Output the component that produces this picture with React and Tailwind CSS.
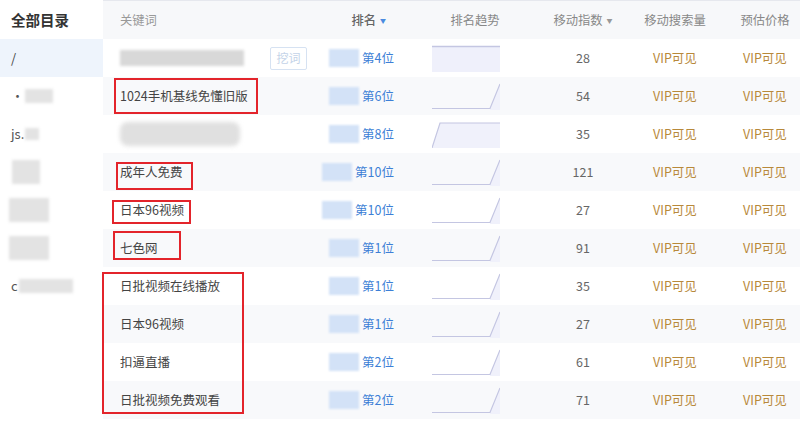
import React from "react";

const rows = [
  { kw: null, blurKw: "a", rank: "第4位", chart: "flat", idx: 28 },
  { kw: "1024手机基线免懂旧版", rank: "第6位", chart: "late", idx: 54 },
  { kw: null, blurKw: "b", rank: "第8位", chart: "early", idx: 35 },
  { kw: "成年人免费", rank: "第10位", chart: "late", idx: 121 },
  { kw: "日本96视频", rank: "第10位", chart: "late", idx: 27 },
  { kw: "七色网", rank: "第1位", chart: "late", idx: 91 },
  { kw: "日批视频在线播放", rank: "第1位", chart: "late", idx: 35 },
  { kw: "日本96视频", rank: "第1位", chart: "late", idx: 27 },
  { kw: "扣逼直播", rank: "第2位", chart: "late", idx: 61 },
  { kw: "日批视频免费观看", rank: "第2位", chart: "late", idx: 71 },
];

function Chart({ type }) {
  return (
    <svg width="68" height="27" viewBox="0 0 68 27">
      {type === "flat" && (
        <>
          <rect x="0" y="1" width="68" height="26" fill="#eff0fb" />
          <line x1="0" y1="1.5" x2="68" y2="1.5" stroke="#c4c6e2" strokeWidth="1.5" />
        </>
      )}
      {type === "early" && (
        <>
          <path d="M0,27 L8,2 L68,2 L68,27 Z" fill="#f0f1fb" />
          <path d="M0,27 L8,2 L68,2" fill="none" stroke="#c4c6e2" strokeWidth="1.2" />
        </>
      )}
      {type === "late" && (
        <>
          <path d="M58,25 L68,1 L68,27 L58,27 Z" fill="#f0f1fb" />
          <path d="M0,25.5 L58,25.5 L68,1" fill="none" stroke="#c4c6e2" strokeWidth="1.2" />
        </>
      )}
    </svg>
  );
}

const sideItems = [
  { t: "/", active: true },
  { blur: "w-[28px] h-[14px]", pre: "·" },
  { pre: "js.", blur: "w-[14px] h-[12px]" },
  { blur: "w-[28px] h-[24px]" },
  { blur: "w-[40px] h-[24px]", shift: true },
  { blur: "w-[40px] h-[24px]", shift: true },
  { pre: "c", blur: "w-[54px] h-[14px]" },
];

export default function App() {
  return (
    <div
      className="relative w-[800px] h-[423px] overflow-hidden bg-white flex"
      style={{ fontFamily: '"Noto Sans CJK SC", "Noto Sans", sans-serif' }}
    >
      {/* sidebar */}
      <div className="w-[103px] flex flex-col bg-white">
        <div className="h-[39px] flex items-center pl-[11px] text-[14.5px] font-bold text-[#333]">
          全部目录
        </div>
        {sideItems.map((s, i) => (
          <div
            key={i}
            className={`h-[38px] flex items-center ${s.shift ? "pl-[8px]" : "pl-[11px]"} text-[13px] text-[#444] ${s.active ? "bg-[#eef4fc]" : ""}`}
          >
            {s.t && <span>{s.t}</span>}
            {s.pre && <span className="text-[#555]">{s.pre}</span>}
            {s.blur && <div className={`${s.blur} bg-[#e3e3e3] blur-[1.5px] ml-[1px]`} />}
          </div>
        ))}
      </div>

      {/* table */}
      <div className="flex-1 flex flex-col border-t border-[#e6e8ee]">
        <div className="h-[38px] grid grid-cols-[217px_100px_110px_102px_86px_82px] items-center bg-[#f7f8fa] text-[12.3px] text-[#888]">
          <div className="pl-[17px] text-[#999]">关键词</div>
          <div className="flex justify-end items-center pr-[34px] text-[#666] font-medium">
            排名<span className="ml-[4px] text-[#4a8be0] text-[6px]">▼</span>
          </div>
          <div className="text-center">排名趋势</div>
          <div className="flex justify-center items-center pl-[4px]">
            移动指数<span className="ml-[4px] text-[#999] text-[6px]">▼</span>
          </div>
          <div className="text-center">移动搜索量</div>
          <div className="text-center pl-[12px]">预估价格</div>
        </div>
        {rows.map((r, i) => (
          <div
            key={i}
            className={`h-[38px] grid grid-cols-[217px_100px_110px_102px_86px_82px] items-center text-[12.5px] ${i % 2 === 1 ? "bg-[#f8f9fb]" : "bg-white"}`}
          >
            <div className="pl-[17px] flex items-center text-[#444]">
              {r.kw ? (
                <span>{r.kw}</span>
              ) : r.blurKw === "a" ? (
                <>
                  <div className="w-[124px] h-[16px] bg-[#d8d8d8] blur-[1.5px]" />
                  <div className="ml-[26px] w-[37px] h-[23px] border border-[#d6e2f2] rounded-[2px] flex items-center justify-center text-[12px] text-[#c4d3e8]">
                    挖词
                  </div>
                </>
              ) : (
                <div className="w-[120px] h-[24px] rounded-[8px] bg-[#e0e0e0] blur-[2px]" />
              )}
            </div>
            <div className="flex justify-end items-center pr-[26px]">
              <div className="w-[30px] h-[18px] bg-[#d3e2f7] blur-[1px] mr-[3px]" />
              <span className="text-[#3d7fd6]">{r.rank}</span>
            </div>
            <div className="pl-[12px] flex items-center">
              <Chart type={r.chart} />
            </div>
            <div className="text-center pl-[4px] text-[#666]">{r.idx}</div>
            <div className="text-center text-[#b8893a]">VIP可见</div>
            <div className="text-center pl-[12px] text-[#b8893a]">VIP可见</div>
          </div>
        ))}
      </div>

      {/* red highlight boxes */}
      <div className="absolute left-[114px] top-[78px] w-[144px] h-[36px] border-2 border-[#e3242b]" />
      <div className="absolute left-[116px] top-[162px] w-[77px] h-[28px] border-2 border-[#e3242b]" />
      <div className="absolute left-[112px] top-[200px] w-[79px] h-[24px] border-2 border-[#e3242b]" />
      <div className="absolute left-[113px] top-[231px] w-[68px] h-[29px] border-2 border-[#e3242b]" />
      <div className="absolute left-[102px] top-[272px] w-[142px] h-[142px] border-2 border-[#e3242b]" />
    </div>
  );
}
